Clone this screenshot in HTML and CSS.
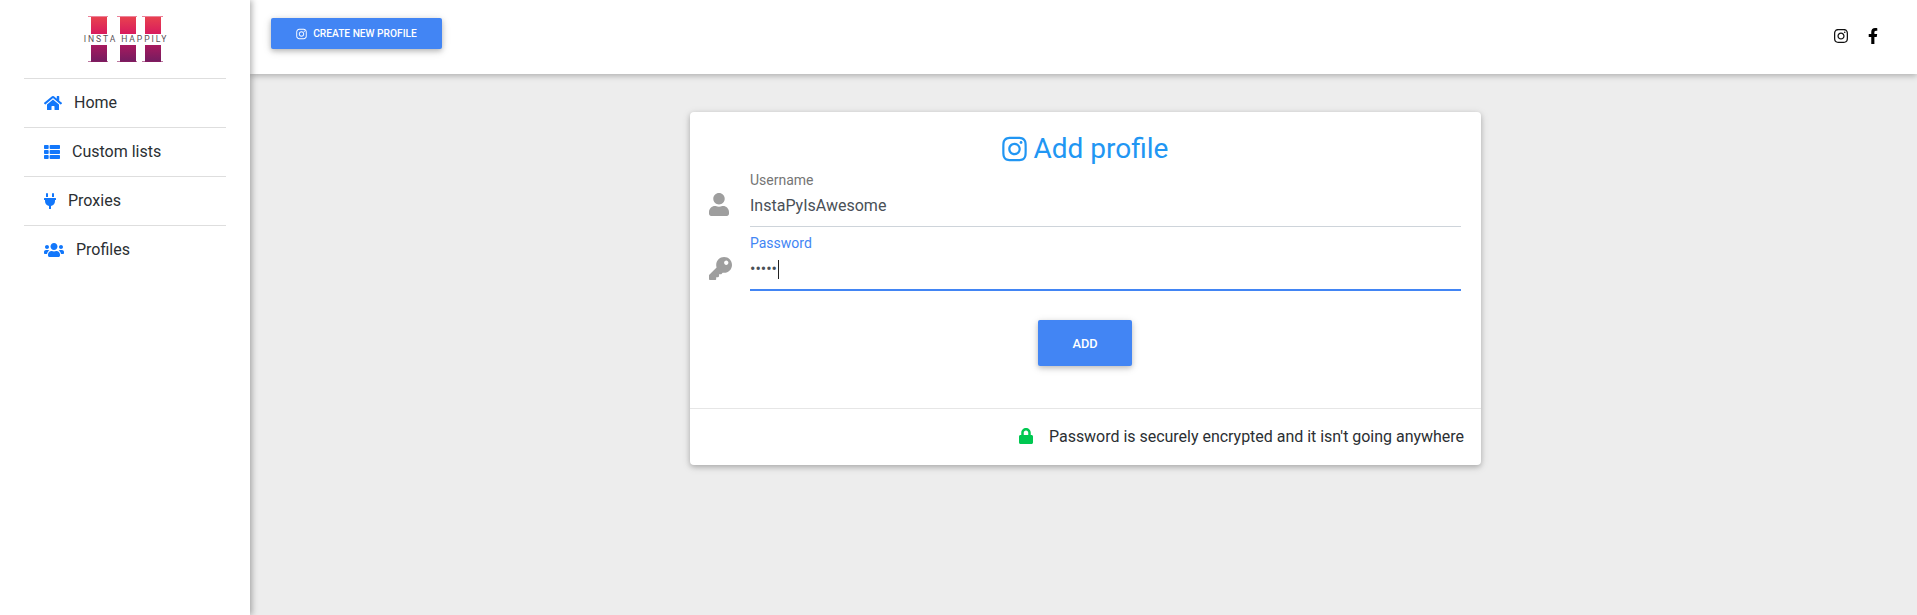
FILE: index.html
```html
<!DOCTYPE html>
<html lang="en">
<head>
<meta charset="utf-8">
<title>Insta Happily</title>
<link rel="stylesheet" href="styles.css">
</head>
<body>
<svg class="defs" aria-hidden="true">
  <defs>
    <linearGradient id="lt" x1="0" y1="0" x2="0" y2="1"><stop offset="0" stop-color="#e8414f"/><stop offset="1" stop-color="#d81b5e"/></linearGradient>
    <linearGradient id="lb" x1="0" y1="0" x2="0" y2="1"><stop offset="0" stop-color="#a81a5e"/><stop offset="1" stop-color="#731c60"/></linearGradient>
    <symbol id="i-ig" viewBox="0 0 448 512"><path d="M224.1 141c-63.6 0-114.9 51.3-114.9 114.9s51.3 114.9 114.9 114.9S339 319.5 339 255.9 287.7 141 224.1 141zm0 189.6c-41.1 0-74.7-33.5-74.7-74.7s33.5-74.7 74.7-74.7 74.7 33.5 74.7 74.7-33.6 74.7-74.7 74.7zm146.4-194.3c0 14.9-12 26.8-26.8 26.8-14.9 0-26.8-12-26.8-26.8s12-26.8 26.8-26.8 26.8 12 26.8 26.8zm76.1 27.2c-1.7-35.9-9.9-67.7-36.2-93.9-26.2-26.2-58-34.4-93.9-36.2-37-2.1-147.9-2.1-184.9 0-35.8 1.7-67.6 9.9-93.9 36.1s-34.4 58-36.2 93.9c-2.1 37-2.1 147.9 0 184.9 1.7 35.9 9.9 67.7 36.2 93.9s58 34.4 93.9 36.2c37 2.1 147.9 2.1 184.9 0 35.9-1.7 67.7-9.9 93.9-36.2 26.2-26.2 34.4-58 36.2-93.9 2.1-37 2.1-147.8 0-184.8zM398.8 388c-7.8 19.6-22.9 34.7-42.6 42.6-29.5 11.7-99.5 9-132.1 9s-102.7 2.6-132.1-9c-19.6-7.8-34.7-22.9-42.6-42.6-11.7-29.5-9-99.5-9-132.1s-2.6-102.7 9-132.1c7.8-19.6 22.9-34.7 42.6-42.6 29.5-11.7 99.5-9 132.1-9s102.7-2.6 132.1 9c19.6 7.8 34.7 22.9 42.6 42.6 11.7 29.5 9 99.5 9 132.1s2.7 102.7-9 132.1z"/></symbol>
    <symbol id="i-fb" viewBox="0 0 320 512"><path d="M279.14 288l14.22-92.66h-88.91v-60.13c0-25.35 12.42-50.06 52.24-50.06h40.42V6.26S260.43 0 225.36 0c-73.22 0-121.08 44.38-121.08 124.72v70.62H22.89V288h81.39v224h100.17V288z"/></symbol>
    <symbol id="i-home" viewBox="0 0 576 512"><path d="M280.37 148.26L96 300.11V464a16 16 0 0 0 16 16l112.06-.29a16 16 0 0 0 15.92-16V368a16 16 0 0 1 16-16h64a16 16 0 0 1 16 16v95.64a16 16 0 0 0 16 16.05L464 480a16 16 0 0 0 16-16V300L295.67 148.26a12.19 12.19 0 0 0-15.3 0zM571.6 251.47L488 182.56V44.05a12 12 0 0 0-12-12h-56a12 12 0 0 0-12 12v72.61L318.47 43a48 48 0 0 0-61 0L4.34 251.47a12 12 0 0 0-1.6 16.9l25.5 31A12 12 0 0 0 45.15 301l235.22-193.74a12.19 12.19 0 0 1 15.3 0L530.9 301a12 12 0 0 0 16.9-1.6l25.5-31a12 12 0 0 0-1.7-16.93z"/></symbol>
    <symbol id="i-list" viewBox="0 0 512 512"><path d="M149.333 216v80c0 13.255-10.745 24-24 24H24c-13.255 0-24-10.745-24-24v-80c0-13.255 10.745-24 24-24h101.333c13.255 0 24 10.745 24 24zM0 376v80c0 13.255 10.745 24 24 24h101.333c13.255 0 24-10.745 24-24v-80c0-13.255-10.745-24-24-24H24c-13.255 0-24 10.745-24 24zM125.333 32H24C10.745 32 0 42.745 0 56v80c0 13.255 10.745 24 24 24h101.333c13.255 0 24-10.745 24-24V56c0-13.255-10.745-24-24-24zm80 448H488c13.255 0 24-10.745 24-24v-80c0-13.255-10.745-24-24-24H205.333c-13.255 0-24 10.745-24 24v80c0 13.255 10.745 24 24 24zm-24-424v80c0 13.255 10.745 24 24 24H488c13.255 0 24-10.745 24-24V56c0-13.255-10.745-24-24-24H205.333c-13.255 0-24 10.745-24 24zm24 264H488c13.255 0 24-10.745 24-24v-80c0-13.255-10.745-24-24-24H205.333c-13.255 0-24 10.745-24 24v80c0 13.255 10.745 24 24 24z"/></symbol>
    <symbol id="i-plug" viewBox="0 0 384 512"><path d="M320,32a32,32,0,0,0-64,0v96h64Zm48,128H16A16,16,0,0,0,0,176v32a16,16,0,0,0,16,16H32v32A160.07,160.07,0,0,0,160,412.8V512h64V412.8A160.07,160.07,0,0,0,352,256V224h16a16,16,0,0,0,16-16V176A16,16,0,0,0,368,160ZM128,32a32,32,0,0,0-64,0v96h64Z"/></symbol>
    <symbol id="i-users" viewBox="0 0 640 512"><path d="M96 224c35.3 0 64-28.7 64-64s-28.7-64-64-64-64 28.7-64 64 28.7 64 64 64zm448 0c35.3 0 64-28.7 64-64s-28.7-64-64-64-64 28.7-64 64 28.7 64 64 64zm32 32h-64c-17.6 0-33.5 7.1-45.1 18.6 40.3 22.1 68.9 62 75.1 109.4h66c17.7 0 32-14.3 32-32v-32c0-35.3-28.7-64-64-64zm-256 0c61.9 0 112-50.1 112-112S381.9 32 320 32 208 82.1 208 144s50.1 112 112 112zm76.8 32h-8.3c-20.8 10-43.9 16-68.5 16s-47.6-6-68.5-16h-8.3C179.6 288 128 339.6 128 403.2V432c0 26.5 21.5 48 48 48h288c26.5 0 48-21.5 48-48v-28.8c0-63.6-51.6-115.2-115.2-115.2zm-223.7-13.4C161.5 263.1 145.6 256 128 256H64c-35.3 0-64 28.7-64 64v32c0 17.7 14.3 32 32 32h65.9c6.3-47.4 34.9-87.3 75.2-109.4z"/></symbol>
    <symbol id="i-user" viewBox="0 0 448 512"><path d="M224 256c70.7 0 128-57.3 128-128S294.7 0 224 0 96 57.3 96 128s57.3 128 128 128zm89.6 32h-16.7c-22.2 10.2-46.9 16-72.9 16s-50.6-5.8-72.9-16h-16.7C60.2 288 0 348.2 0 422.4V464c0 26.5 21.5 48 48 48h352c26.5 0 48-21.5 48-48v-41.6c0-74.2-60.2-134.4-134.4-134.4z"/></symbol>
    <symbol id="i-key" viewBox="0 0 512 512"><path d="M512 176.001C512 273.203 433.202 352 336 352c-11.22 0-22.19-1.062-32.827-3.069l-24.012 27.014A23.999 23.999 0 0 1 261.223 384H224v40c0 13.255-10.745 24-24 24h-40v40c0 13.255-10.745 24-24 24H24c-13.255 0-24-10.745-24-24v-78.059c0-6.365 2.529-12.47 7.029-16.971l161.802-161.802C163.108 213.814 160 195.271 160 176 160 78.798 238.797.001 335.999 0 433.488-.001 512 78.511 512 176.001zM336 128c0 26.51 21.49 48 48 48s48-21.49 48-48-21.49-48-48-48-48 21.49-48 48z"/></symbol>
    <symbol id="i-lock" viewBox="0 0 448 512"><path d="M400 224h-24v-72C376 68.2 307.8 0 224 0S72 68.2 72 152v72H48c-26.5 0-48 21.5-48 48v192c0 26.5 21.5 48 48 48h352c26.5 0 48-21.5 48-48V272c0-26.5-21.5-48-48-48zm-104 0H152v-72c0-39.7 32.3-72 72-72s72 32.3 72 72v72z"/></symbol>
  </defs>
</svg>

<div class="app">
  <aside class="sidebar">
    <div class="logo">
      <svg class="logo-art" viewBox="0 0 84 48" width="84" height="48" aria-hidden="true">
        <g fill="url(#lt)">
          <rect x="4" y="1" width="20" height="1" opacity=".6"/><rect x="7" y="2" width="16" height="17"/>
          <rect x="33" y="1" width="20" height="1" opacity=".6"/><rect x="36" y="2" width="16" height="17"/>
          <rect x="58" y="1" width="21" height="1" opacity=".6"/><rect x="61" y="2" width="16" height="17"/>
        </g>
        <g fill="url(#lb)">
          <rect x="7" y="30" width="16" height="17"/><rect x="4" y="46" width="20" height="1" opacity=".6"/>
          <rect x="36" y="30" width="16" height="17"/><rect x="33" y="46" width="20" height="1" opacity=".6"/>
          <rect x="61" y="30" width="16" height="17"/><rect x="58" y="46" width="21" height="1" opacity=".6"/>
        </g>
      </svg>
      <span class="logo-text">INSTA HAPPILY</span>
    </div>
    <nav class="nav">
      <a class="nav-item"><svg class="ico w18"><use href="#i-home"/></svg>Home</a>
      <a class="nav-item"><svg class="ico w16"><use href="#i-list"/></svg>Custom lists</a>
      <a class="nav-item"><svg class="ico w12"><use href="#i-plug"/></svg>Proxies</a>
      <a class="nav-item"><svg class="ico w20"><use href="#i-users"/></svg>Profiles</a>
    </nav>
  </aside>

  <div class="main">
    <header class="topbar">
      <button class="btn-new"><svg class="btn-ico"><use href="#i-ig"/></svg>Create new profile</button>
      <div class="social">
        <svg class="soc-ig"><use href="#i-ig"/></svg>
        <svg class="soc-fb"><use href="#i-fb"/></svg>
      </div>
    </header>

    <main class="content">
      <section class="card">
        <div class="card-body">
          <h1 class="title"><svg class="title-ico"><use href="#i-ig"/></svg>Add profile</h1>
          <div class="row">
            <svg class="field-ico user"><use href="#i-user"/></svg>
            <div class="field">
              <label class="label">Username</label>
              <div class="value">InstaPyIsAwesome</div>
            </div>
          </div>
          <div class="row second">
            <svg class="field-ico key"><use href="#i-key"/></svg>
            <div class="field active">
              <label class="label">Password</label>
              <div class="value dots">•••••<span class="caret"></span></div>
            </div>
          </div>
          <div class="actions"><button class="btn-add">Add</button></div>
        </div>
        <footer class="card-foot">
          <svg class="lock"><use href="#i-lock"/></svg>
          <span class="foot-text">Password is securely encrypted and it isn't going anywhere</span>
        </footer>
      </section>
    </main>
  </div>
</div>
</body>
</html>
```
FILE: styles.css
```css
* { box-sizing: border-box; }
html, body { margin: 0; height: 100%; overflow: hidden; }
body { font-family: Roboto, "Liberation Sans", sans-serif; color: #2b2f33; background: #ededed; }
.defs { position: absolute; width: 0; height: 0; }
.app { display: flex; height: 615px; }

.sidebar {
  width: 250px; flex: none; background: #fff; padding: 0 24px;
  box-shadow: 2px 0 6px rgba(0,0,0,.3); position: relative; z-index: 2;
}
.logo { height: 78px; padding-top: 15px; display: flex; justify-content: center; position: relative; }
.logo-art { display: block; margin-left: 1px; }
.logo-text {
  position: absolute; left: 2px; right: 0; top: 33px; text-align: center; background: transparent;
  font-size: 8.6px; font-weight: 400; line-height: 12px; letter-spacing: 1.9px; color: #5a5055;
}
.nav-item {
  display: flex; align-items: center; gap: 12px; height: 49px; padding: 0 0 1px 20px;
  border-top: 1px solid #dedede; font-size: 16px; color: #2b2f33;
}
.ico { height: 16px; fill: #1277fb; flex: none; }
.w18 { width: 18px; }
.w16 { width: 16px; }
.w12 { width: 12px; }
.w20 { width: 20px; }

.main { flex: 1; min-width: 0; display: flex; flex-direction: column; }
.topbar {
  height: 74px; background: #fff; display: flex; align-items: flex-start;
  justify-content: space-between; padding: 18px 39px 0 21px;
  box-shadow: 0 2px 6px rgba(0,0,0,.26); position: relative; z-index: 1;
}
.btn-new {
  width: 171px; height: 31px; border: 0; border-radius: 2px; background: #4285f4; color: #fff;
  display: flex; align-items: center; justify-content: center; gap: 6px; padding: 0;
  font: 500 10.2px Roboto, sans-serif; text-transform: uppercase;
  box-shadow: 0 2px 5px rgba(0,0,0,.2), 0 2px 10px rgba(0,0,0,.14);
}
.btn-ico { width: 11px; height: 12px; fill: #fff; }
.social { display: flex; align-items: center; gap: 20px; margin-top: 10px; }
.soc-ig { width: 14px; height: 16px; fill: #111; }
.soc-fb { width: 10px; height: 16px; fill: #000; }

.content { flex: 1; padding: 38px 436px 0 440px; }
.card {
  height: 353px; background: #fff; border-radius: 4px; display: flex; flex-direction: column;
  box-shadow: 0 2px 5px rgba(0,0,0,.2), 0 2px 10px rgba(0,0,0,.12);
}
.card-body { flex: 1; padding: 19px 20px 0 19px; }
.title {
  margin: 0 0 2px; display: flex; align-items: center; justify-content: center; gap: 7px;
  font-size: 28px; font-weight: 400; line-height: 36px; color: #2196f3;
}
.title-ico { width: 25px; height: 28px; fill: #2196f3; }
.row { display: flex; align-items: center; }
.second { margin-top: 5px; }
.field-ico { height: 23px; fill: #9e9e9e; flex: none; }
.user { width: 20px; margin: 13px 21px 0 0; }
.key { width: 23px; margin: 14px 18px 0 0; }
.field { flex: 1; height: 58px; border-bottom: 1px solid #ced4da; padding-top: 1px; }
.field.active { height: 59px; border-bottom: 2px solid #4285f4; }
.label { display: block; font-size: 14px; line-height: 20px; color: #757575; }
.active .label { color: #4285f4; }
.value { font-size: 16px; line-height: 24px; margin-top: 4px; color: #495057; }
.dots { display: flex; align-items: center; color: #495057; }
.caret { width: 1px; height: 19px; background: #222; margin-left: 1px; }
.actions { display: flex; justify-content: center; margin-top: 29px; }
.btn-add {
  width: 94px; height: 46px; border: 0; border-radius: 2px; background: #4285f4; color: #fff;
  font: 500 12.8px Roboto, sans-serif; text-transform: uppercase;
  box-shadow: 0 2px 5px rgba(0,0,0,.18), 0 2px 10px rgba(0,0,0,.12);
}
.card-foot {
  height: 57px; border-top: 1px solid #e6e6e6; display: flex; align-items: center;
  justify-content: flex-end; gap: 16px; padding: 0 17px 2px 0; font-size: 16px; color: #2b2f33;
}
.foot-text { letter-spacing: -.02px; }
.lock { width: 14px; height: 16px; fill: #00c851; }
```
